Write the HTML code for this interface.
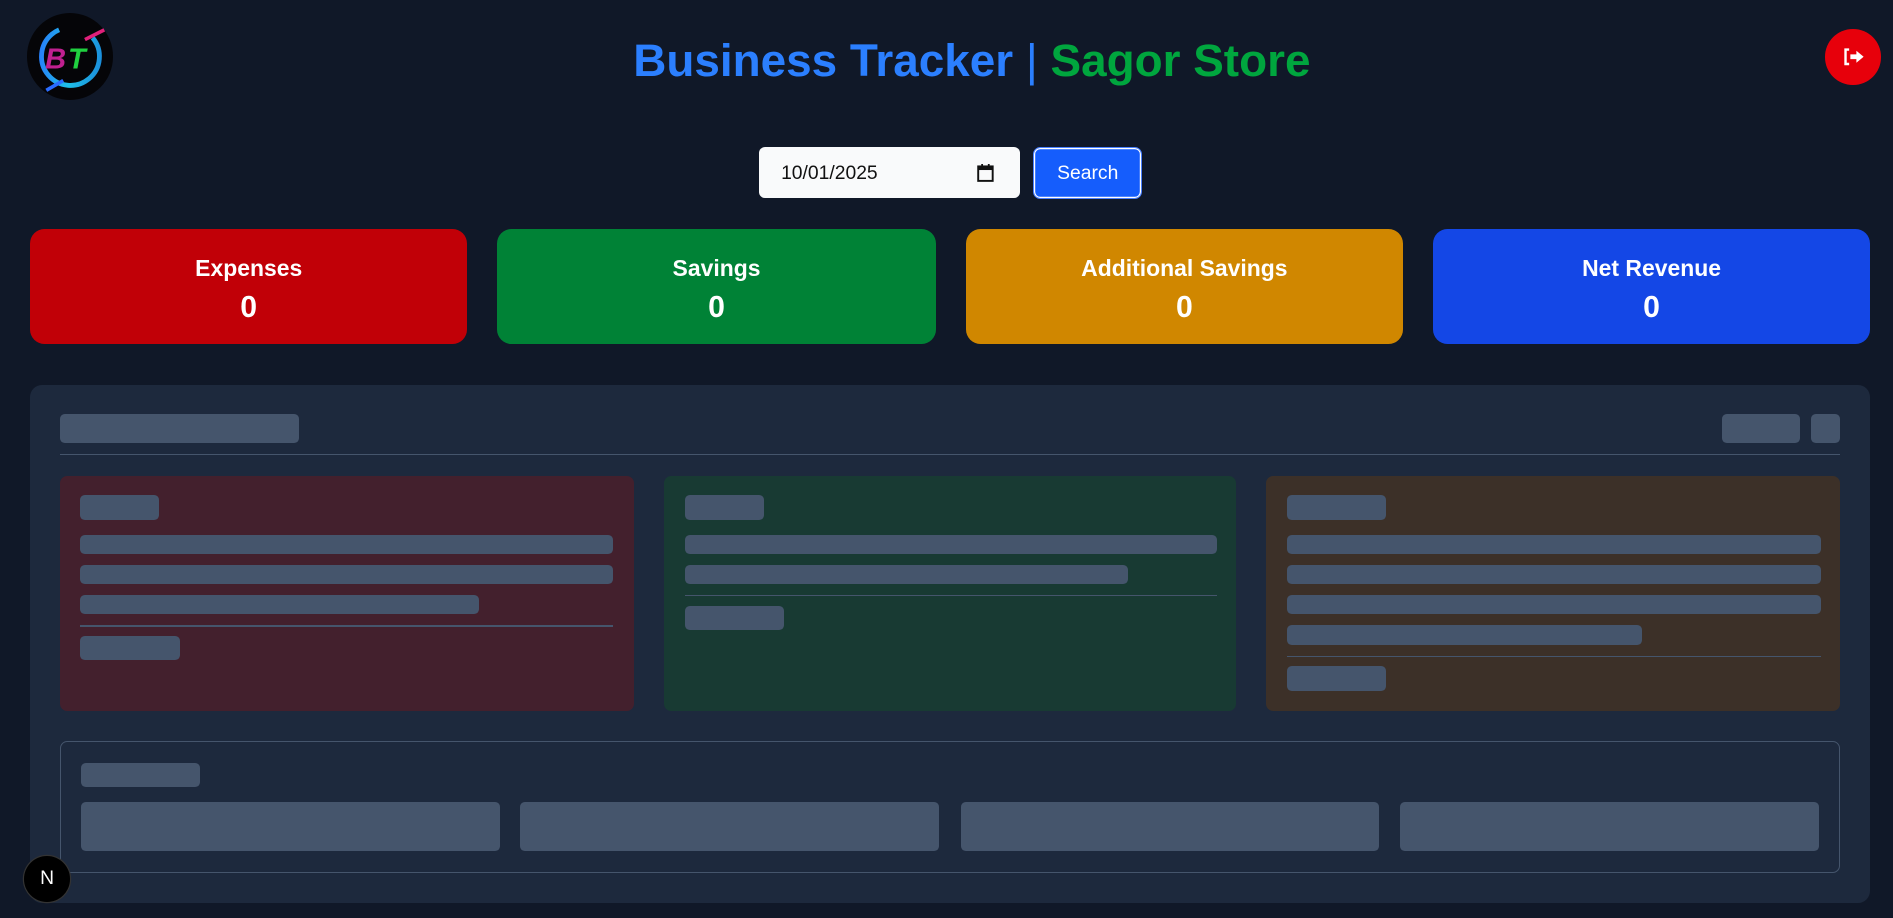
<!DOCTYPE html>
<html><head><meta charset="utf-8"><style>
html{zoom:1.20727}
body{margin:0;width:1568px;height:760px;background:#101828;font-family:"Liberation Sans",sans-serif;position:relative;overflow:hidden}
.a{position:absolute}
.sk{position:absolute;background:#45556c;border-radius:4px}
.card{position:absolute;top:190px;height:95px;width:362px;border-radius:12px;color:#fff;text-align:center;font-weight:bold}
.card .t{font-size:19px;margin-top:21px}
.card .v{font-size:25px;margin-top:8px}
.ln{position:absolute;height:1px;background:#45556c}
</style></head><body>
<div class="a" style="left:22px;top:11px;width:72px;height:72px;border-radius:50%;background:#050508">
<svg width="72" height="72" viewBox="0 0 72 72"><defs><linearGradient id="g" x1="0" y1="0" x2="1" y2="1"><stop offset="0" stop-color="#2a6cff"/><stop offset=".5" stop-color="#1ec0e8"/><stop offset="1" stop-color="#1a7fd8"/></linearGradient></defs>
<circle cx="36" cy="36" r="24" fill="none" stroke="url(#g)" stroke-width="4" stroke-dasharray="120 31" transform="rotate(-40 36 36)"/>
<path d="M48 22 L64 14" stroke="#e0207a" stroke-width="3"/>
<path d="M16 64 L30 56" stroke="#2a6cff" stroke-width="3"/>
<text x="15" y="46" font-family="Liberation Sans" font-weight="bold" font-style="italic" font-size="24" fill="#c02090">B</text>
<text x="34" y="46" font-family="Liberation Sans" font-weight="bold" font-style="italic" font-size="24" fill="#20d040">T</text></svg></div>
<div class="a" style="left:0;width:1610px;top:27px;text-align:center;font-size:38px;font-weight:bold;white-space:nowrap"><span style="color:#2b7fff">Business Tracker</span> <span style="color:#2b7fff;font-weight:normal">|</span> <span style="color:#00a63e">Sagor Store</span></div>
<div class="a" style="left:1512px;top:24px;width:46px;height:46px;border-radius:50%;background:#e7000b">
<svg width="46" height="46" viewBox="0 0 46 46"><path d="M20 17h-3v12h3" fill="none" stroke="#fff" stroke-width="2"/><path d="M21 21h5v-3l6 5-6 5v-3h-5z" fill="#fff"/></svg></div>
<div class="a" style="left:629px;top:122px;width:216px;height:42px;background:#f9fafb;border-radius:5px;font-size:16px;line-height:44px;box-sizing:border-box;padding-left:18px;color:#111">10/01/2025
<svg class="a" style="left:180px;top:14px" width="14" height="15" viewBox="0 0 14 15"><rect x="1" y="2" width="12" height="12" fill="none" stroke="#111" stroke-width="1.6"/><rect x="1" y="2" width="12" height="3" fill="#111"/><rect x="3.5" y="0" width="1.5" height="3" fill="#111"/><rect x="9" y="0" width="1.5" height="3" fill="#111"/></svg></div>
<div class="a" style="left:856px;top:122px;width:90px;height:43px;background:#155dfc;border-radius:6px;box-shadow:0 0 0 1px #fff inset,0 0 0 2px #155dfc inset;box-sizing:border-box;border:1px solid #4a80ff;color:#fff;font-size:16px;text-align:center;line-height:43px">Search</div>
<div class="card" style="left:25px;background:#c10007"><div class="t">Expenses</div><div class="v">0</div></div>
<div class="card" style="left:412px;width:363px;background:#008236"><div class="t">Savings</div><div class="v">0</div></div>
<div class="card" style="left:800px;background:#d08700"><div class="t">Additional Savings</div><div class="v">0</div></div>
<div class="card" style="left:1187px;background:#1447e6"><div class="t">Net Revenue</div><div class="v">0</div></div>
<div class="a" style="left:25px;top:319px;width:1524px;height:429px;background:#1d293d;border-radius:10px"></div>
<div class="sk" style="left:50px;top:343px;width:198px;height:24px"></div>
<div class="sk" style="left:1426px;top:343px;width:65px;height:24px"></div>
<div class="sk" style="left:1500px;top:343px;width:24px;height:24px"></div>
<div class="ln" style="left:50px;top:376px;width:1474px"></div>
<div class="a" style="left:50px;top:394px;width:475px;height:195px;background:#43202d;border-radius:6px"></div>
<div class="a" style="left:550px;top:394px;width:474px;height:195px;background:#183a33;border-radius:6px"></div>
<div class="a" style="left:1049px;top:394px;width:475px;height:195px;background:#3c3028;border-radius:6px"></div>
<div class="sk" style="left:66px;top:410px;width:66px;height:21px"></div>
<div class="sk" style="left:66px;top:443px;width:442px;height:16px"></div>
<div class="sk" style="left:66px;top:468px;width:442px;height:16px"></div>
<div class="sk" style="left:66px;top:493px;width:331px;height:16px"></div>
<div class="ln" style="left:66px;top:518px;width:442px"></div>
<div class="sk" style="left:66px;top:527px;width:83px;height:20px"></div>
<div class="sk" style="left:567px;top:410px;width:66px;height:21px"></div>
<div class="sk" style="left:567px;top:443px;width:441px;height:16px"></div>
<div class="sk" style="left:567px;top:468px;width:367px;height:16px"></div>
<div class="ln" style="left:567px;top:493px;width:441px"></div>
<div class="sk" style="left:567px;top:502px;width:82px;height:20px"></div>
<div class="sk" style="left:1066px;top:410px;width:82px;height:21px"></div>
<div class="sk" style="left:1066px;top:443px;width:442px;height:16px"></div>
<div class="sk" style="left:1066px;top:468px;width:442px;height:16px"></div>
<div class="sk" style="left:1066px;top:493px;width:442px;height:16px"></div>
<div class="sk" style="left:1066px;top:518px;width:294px;height:16px"></div>
<div class="ln" style="left:1066px;top:543px;width:442px"></div>
<div class="sk" style="left:1066px;top:552px;width:82px;height:20px"></div>
<div class="a" style="left:50px;top:614px;width:1474px;height:109px;border:1px solid #45556c;border-radius:6px;box-sizing:border-box"></div>
<div class="sk" style="left:67px;top:632px;width:99px;height:20px"></div>
<div class="sk" style="left:67px;top:664px;width:347px;height:41px"></div>
<div class="sk" style="left:431px;top:664px;width:347px;height:41px"></div>
<div class="sk" style="left:796px;top:664px;width:346px;height:41px"></div>
<div class="sk" style="left:1160px;top:664px;width:347px;height:41px"></div>
<div class="a" style="left:20px;top:709px;width:38px;height:38px;border-radius:50%;background:#000;box-shadow:0 0 0 1px #333;color:#fff;font-size:16px;text-align:center;line-height:38px">N</div>
</body></html>
